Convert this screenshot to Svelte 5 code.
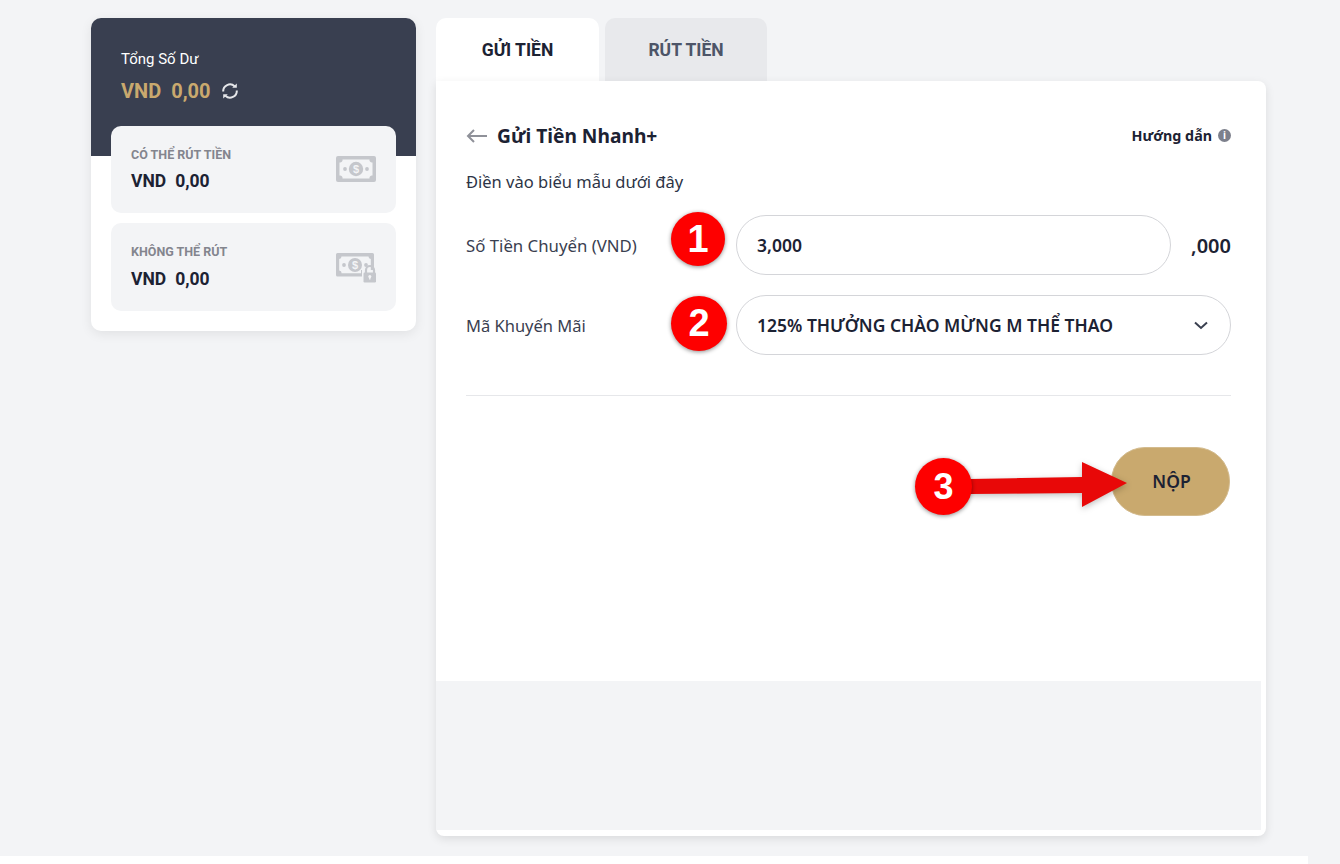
<script>
  const balances = [
    { label: 'CÓ THỂ RÚT TIỀN', amount: '0,00', locked: false },
    { label: 'KHÔNG THỂ RÚT', amount: '0,00', locked: true }
  ];
</script>

<div class="page">
  <div class="topbar"></div>
  <div class="content">
    <aside class="side">
      <div class="total">
        <div class="total-label">Tổng Số Dư</div>
        <div class="total-value">
          <span>VND</span><span>0,00</span>
          <svg class="refresh" width="18" height="18" viewBox="0 0 18 18" fill="none" stroke="#e6e7ea" stroke-width="2">
            <path d="M13.600 4.200A6.800 6.800 0 0 0 2.200 9.500" />
            <path d="M4.400 13.800A6.800 6.800 0 0 0 15.800 8.500" />
            <path d="M11.200 5.800h4.600V1.400z" fill="#e6e7ea" stroke="none" />
            <path d="M6.800 12.200H2.200v4.400z" fill="#e6e7ea" stroke="none" />
          </svg>
        </div>
      </div>
      <div class="wallets">
        {#each balances as b}
          <div class="wallet">
            <div>
              <div class="wallet-label">{b.label}</div>
              <div class="wallet-value"><span>VND</span><span>{b.amount}</span></div>
            </div>
            <svg class="money" width="40" height="32" viewBox="0 0 40 32">
              {#if b.locked}
                <path fill="#c5c7cc" fill-rule="evenodd" d="M1.500 2h35a1.500 1.500 0 0 1 1.500 1.500V20H28v5.500H1.500A1.500 1.500 0 0 1 0 24V3.500A1.500 1.500 0 0 1 1.500 2zm4 3.500A2.500 2.500 0 0 1 3.200 8v11.500A2.500 2.500 0 0 1 5.500 22.300H25V19h9.800V8A2.500 2.500 0 0 1 32.500 5.500z" />
                <circle cx="19" cy="14" r="7" fill="#c5c7cc" />
                <circle cx="8" cy="14" r="1.900" fill="#c5c7cc" />
                <circle cx="30" cy="14" r="1.900" fill="#c5c7cc" />
                <text x="19" y="18" text-anchor="middle" class="dollar">$</text>
                <rect x="26" y="19" width="14" height="13" fill="#f3f4f6" />
                <path fill="none" stroke="#c5c7cc" stroke-width="2.200" d="M30 23v-4a4 4 0 0 1 8 0v4" />
                <rect x="27.500" y="21.500" width="12.500" height="10" rx="1.200" fill="#c5c7cc" />
                <circle cx="33.800" cy="25.500" r="1.500" fill="#f3f4f6" />
                <rect x="33.100" y="25.500" width="1.400" height="3" fill="#f3f4f6" />
              {:else}
                <path fill="#c5c7cc" fill-rule="evenodd" d="M2 2h36a2 2 0 0 1 2 2v22a2 2 0 0 1-2 2H2a2 2 0 0 1-2-2V4a2 2 0 0 1 2-2zm4.500 3.500A2.500 2.500 0 0 1 3.500 8.500v13a2.500 2.500 0 0 1 3 3h27a2.500 2.500 0 0 1 3-3v-13a2.500 2.500 0 0 1-3-3z" />
                <circle cx="20" cy="15" r="7.200" fill="#c5c7cc" />
                <circle cx="9" cy="15" r="1.900" fill="#c5c7cc" />
                <circle cx="31" cy="15" r="1.900" fill="#c5c7cc" />
                <text x="20" y="19" text-anchor="middle" class="dollar">$</text>
              {/if}
            </svg>
          </div>
        {/each}
      </div>
    </aside>

    <main class="main">
      <div class="tabs">
        <div class="tab active">GỬI TIỀN</div>
        <div class="tab">RÚT TIỀN</div>
      </div>
      <section class="card">
        <div class="card-body">
          <header class="head">
            <svg class="back" width="22" height="14" viewBox="0 0 22 14" fill="none" stroke="#8f9199" stroke-width="2">
              <path d="M21 7H2M8 1 2 7l6 6" />
            </svg>
            <h2>Gửi Tiền Nhanh+</h2>
            <div class="guide">
              <span>Hướng dẫn</span>
              <span class="info">i</span>
            </div>
          </header>
          <p class="hint">Điền vào biểu mẫu dưới đây</p>
          <div class="row first">
            <label for="amount">Số Tiền Chuyển (VND)</label>
            <input id="amount" value="3,000" />
            <span class="suffix">,000</span>
          </div>
          <div class="row">
            <span class="label">Mã Khuyến Mãi</span>
            <div class="select">
              <span>125% THƯỞNG CHÀO MỪNG M THỂ THAO</span>
              <svg width="14" height="9" viewBox="0 0 14 9" fill="none" stroke="#3a4050" stroke-width="2">
                <path d="M1 1.500 7 7l6-5.500" />
              </svg>
            </div>
          </div>
          <div class="actions">
            <button class="submit">NỘP</button>
          </div>
        </div>
        <div class="notes"></div>
      </section>
    </main>
  </div>
  <footer class="foot"></footer>

  <div class="step one">1</div>
  <div class="step two">2</div>
  <svg class="arrow" width="170" height="60" viewBox="0 0 170 60">
    <path fill="#e80808" d="M0 24 112 22V7L157 28 112 52V38L0 39z" />
  </svg>
  <div class="step three">3</div>
</div>

<style>
  :global(body) {
    background: #f3f4f6;
    color: #1c2233;
    font-family: Roboto, "Noto Sans", sans-serif;
  }

  .page {
    height: 864px;
    overflow: hidden;
    position: relative;
  }

  .topbar {
    background: #f3f4f6;
    box-shadow: 0 3px 10px rgba(0, 0, 0, 0.12);
    height: 0;
    margin-inline: 91px 74px;
  }

  .content {
    box-sizing: border-box;
    display: flex;
    gap: 20px;
    height: 836px;
    padding-left: 91px;
    padding-top: 18px;
  }

  .side {
    align-self: flex-start;
    background: #fff;
    border-radius: 10px;
    box-shadow: 0 3px 12px rgba(0, 0, 0, 0.08);
    height: 313px;
    width: 325px;
  }

  .total {
    background: #393f50;
    border-radius: 10px 10px 0 0;
    box-sizing: border-box;
    color: #fff;
    height: 138px;
    padding: 31px 30px 0;
  }

  .total-label {
    font-size: 15px;
    line-height: 20px;
  }

  .total-value {
    align-items: center;
    color: #c9a96e;
    display: flex;
    font-size: 20px;
    font-weight: 700;
    gap: 10px;
    line-height: 24px;
    margin-top: 10px;
  }

  .wallets {
    display: flex;
    flex-direction: column;
    gap: 10px;
    margin-top: -30px;
    padding-inline: 20px;
  }

  .wallet {
    align-items: center;
    background: #f3f4f6;
    border-radius: 10px;
    box-sizing: border-box;
    display: flex;
    height: 87px;
    justify-content: space-between;
    padding-inline: 20px;
  }

  .wallet:last-child {
    height: 88px;
  }

  .wallet:last-child .wallet-value {
    margin-top: 8px;
  }

  .wallet-label {
    color: #83858e;
    font-size: 12.500px;
    font-weight: 700;
    line-height: 16px;
  }

  .wallet-value {
    display: flex;
    font-size: 17.500px;
    font-weight: 700;
    gap: 9px;
    line-height: 22px;
    margin-top: 7px;
  }

  .dollar {
    fill: #f3f4f6;
    font-family: "Liberation Sans", sans-serif;
    font-size: 11px;
    font-weight: 700;
  }

  .main {
    display: flex;
    flex-direction: column;
    width: 830px;
  }

  .tabs {
    display: flex;
    gap: 6px;
    height: 63px;
  }

  .tab {
    align-items: center;
    background: #e8e9ec;
    border-radius: 10px 10px 0 0;
    box-sizing: border-box;
    color: #4d5568;
    display: flex;
    font-size: 17.500px;
    font-weight: 700;
    height: 63px;
    justify-content: center;
    width: 162px;
  }

  .tab.active {
    background: #fff;
    color: #1c2233;
    width: 163px;
  }

  .card {
    background: #fff;
    border-radius: 0 8px 8px 8px;
    box-shadow: 0 3px 10px rgba(0, 0, 0, 0.1);
    display: flex;
    flex: 1;
    flex-direction: column;
  }

  .card-body {
    box-sizing: border-box;
    flex: 1;
    padding: 40px 35px 0 30px;
  }

  .head {
    align-items: center;
    display: flex;
    height: 30px;
  }

  .back {
    margin-right: 9px;
  }

  h2 {
    font-family: "Noto Sans", sans-serif;
    font-size: 19.200px;
    font-weight: 700;
    line-height: 30px;
    margin: 0;
  }

  .guide {
    align-items: center;
    display: flex;
    font-family: "Noto Sans", sans-serif;
    font-size: 14.300px;
    font-weight: 700;
    gap: 6px;
    margin-left: auto;
    margin-top: -2px;
  }

  .info {
    background: #7d808c;
    border-radius: 50%;
    color: #fff;
    font-size: 10px;
    height: 13px;
    line-height: 13px;
    text-align: center;
    width: 13px;
  }

  .hint {
    color: #2d3446;
    font-family: "Noto Sans", sans-serif;
    font-size: 16.500px;
    line-height: 22px;
    margin: 20px 0 0;
  }

  .row {
    align-items: center;
    display: flex;
    font-family: "Noto Sans", sans-serif;
    font-size: 16.500px;
    height: 60px;
    margin-top: 20px;
  }

  .row.first {
    margin-top: 22px;
  }

  label,
  .label {
    color: #3a4050;
    width: 270px;
  }

  label {
    font-size: 16.800px;
  }

  input,
  .select {
    background: #fff;
    border: 1px solid #d4d5d9;
    border-radius: 30px;
    box-sizing: border-box;
    color: #1c2233;
    font-family: "Noto Sans", sans-serif;
    font-size: 17.500px;
    font-weight: 600;
    height: 60px;
    padding-inline: 20px;
  }

  input {
    outline: 0;
    width: 435px;
  }

  .suffix {
    font-size: 20px;
    font-weight: 600;
    margin-left: auto;
  }

  .select {
    align-items: center;
    display: flex;
    flex: 1;
    justify-content: space-between;
    padding-right: 22px;
  }

  .actions {
    border-top: 1px solid #e6e7ea;
    display: flex;
    justify-content: flex-end;
    margin-top: 40px;
    padding-top: 51px;
  }

  .submit {
    background: #c9a96e;
    border: 1px solid #d3bb8e;
    border-radius: 34px;
    color: #1c2233;
    font-family: "Noto Sans", sans-serif;
    font-size: 17.500px;
    font-weight: 600;
    height: 69px;
    margin-right: 1px;
    padding: 0 0 2px 2px;
    width: 119px;
  }

  .notes {
    background: #f3f4f6;
    height: 149px;
    margin-bottom: 6px;
    margin-right: 5px;
  }

  .foot {
    background: #fff;
    height: 8px;
    margin-top: 20px;
    width: 1308px;
  }

  .step {
    align-items: center;
    background: #fe0000;
    border-radius: 50%;
    box-shadow: 0 1px 4px rgba(0, 0, 0, 0.45);
    color: #fff;
    display: flex;
    font-family: "Liberation Sans", sans-serif;
    font-size: 38px;
    font-weight: 700;
    height: 54px;
    justify-content: center;
    position: absolute;
    width: 54px;
  }

  .one {
    left: 671px;
    top: 212px;
  }

  .two {
    height: 55px;
    left: 671px;
    top: 296px;
    width: 56px;
  }

  .three {
    font-size: 36px;
    height: 57px;
    left: 915px;
    top: 458px;
    width: 57px;
  }

  .arrow {
    filter: drop-shadow(0 2px 3px rgba(0, 0, 0, 0.25));
    left: 970px;
    position: absolute;
    top: 455px;
  }
</style>
